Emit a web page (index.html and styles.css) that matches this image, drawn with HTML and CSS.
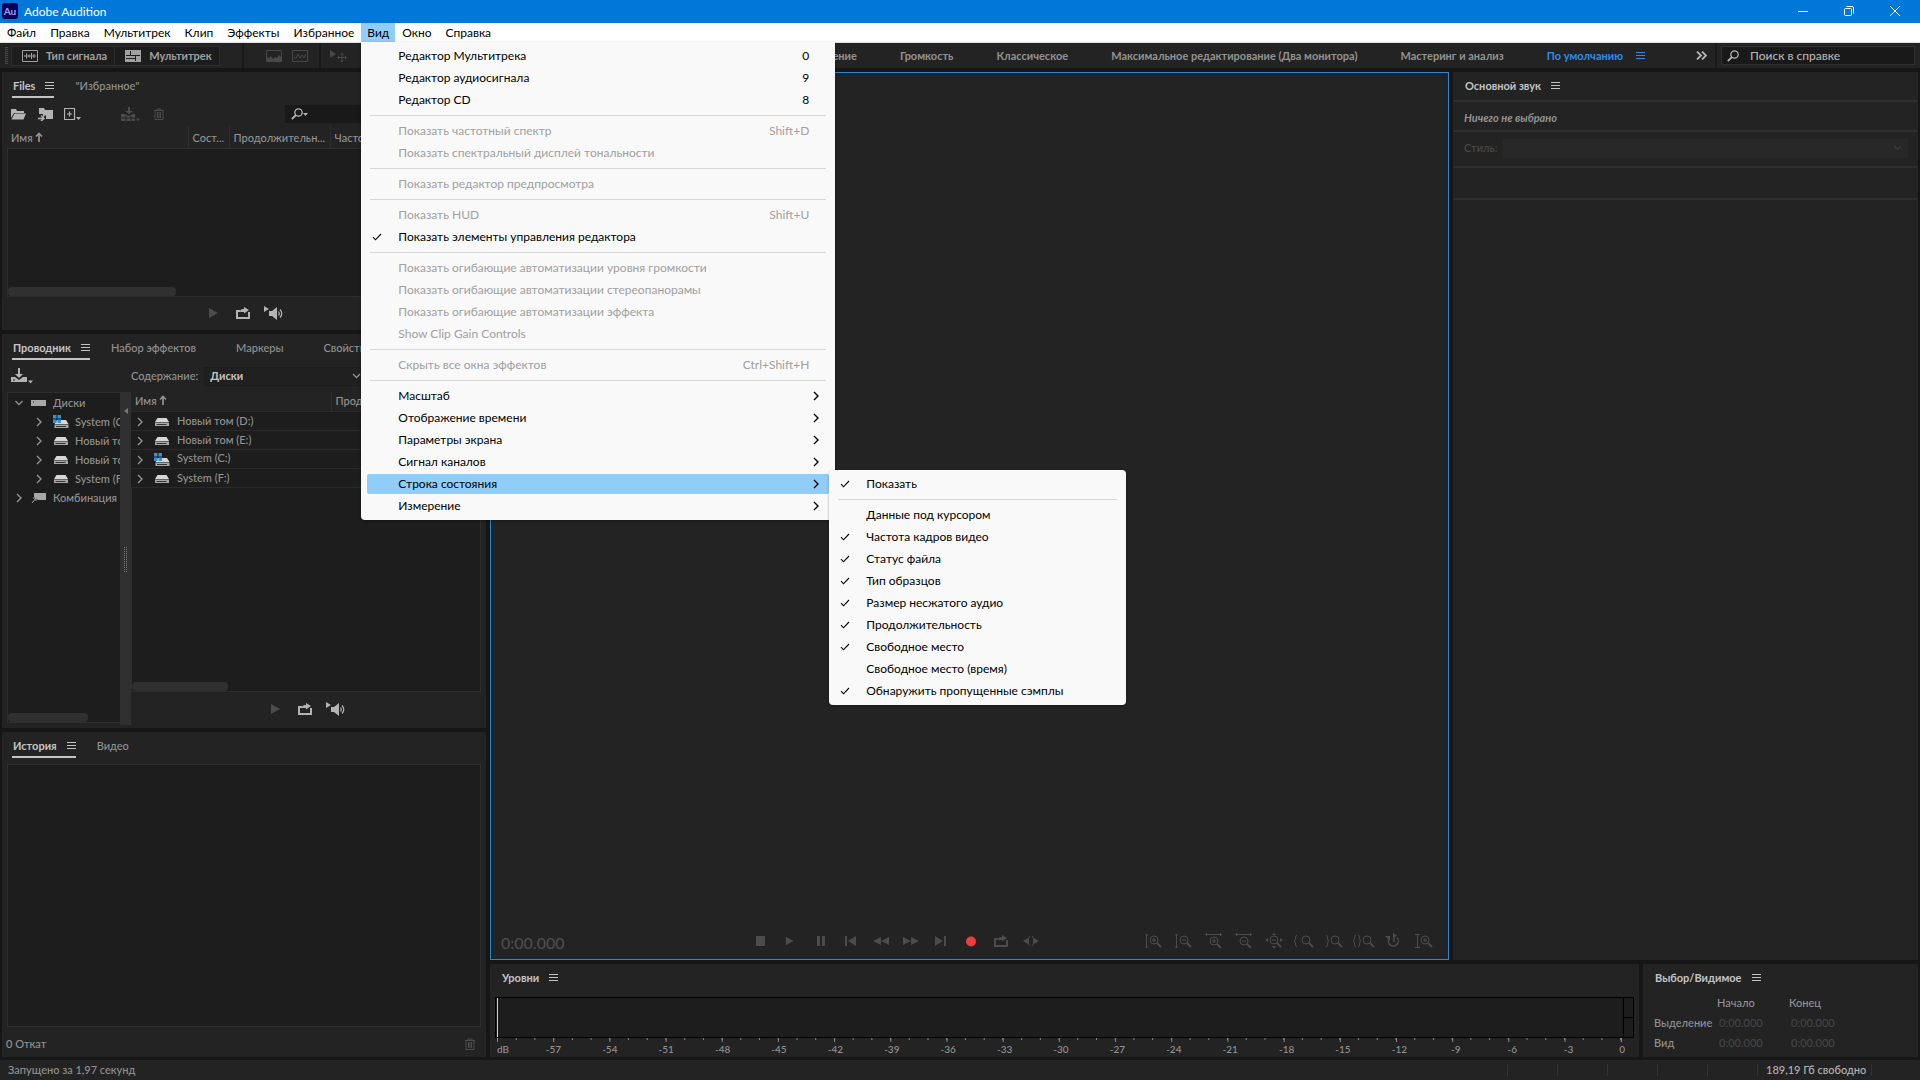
FILE: index.html
```html
<!DOCTYPE html>
<html lang="ru">
<head>
    <meta charset="UTF-8">
    <meta name="viewport" content="width=device-width, initial-scale=1.0">
    <title>Adobe Audition</title>
    <link rel="stylesheet" href="styles.css">
</head>
<body>
    <!-- shared icons -->
    <svg class="sprite" aria-hidden="true">
        <symbol id="i-menu" viewBox="0 0 9 9"><path d="M0 1.5h9M0 4.5h9M0 7.5h9" stroke="currentColor" fill="none"/></symbol>
        <symbol id="i-check" viewBox="0 0 10 8"><path d="M1 4.2l2.5 2.6L9 1" stroke="currentColor" fill="none" stroke-width="1.1"/></symbol>
        <symbol id="i-right" viewBox="0 0 6 10"><path d="M1 1l4 4-4 4" stroke="currentColor" fill="none" stroke-width="1.4"/></symbol>
        <symbol id="i-down" viewBox="0 0 9 6"><path d="M1 1l3.5 3.5L8 1" stroke="currentColor" fill="none" stroke-width="1.3"/></symbol>
        <symbol id="i-sort" viewBox="0 0 8 10"><path d="M4 10V2M1 4.5L4 1.5l3 3" stroke="currentColor" fill="none" stroke-width="1.7"/></symbol>
        <symbol id="i-search" viewBox="0 0 12 12"><circle cx="7.5" cy="4.5" r="3.7" stroke="currentColor" fill="none" stroke-width="1.3"/><path d="M5 7L.8 11.2" stroke="currentColor" stroke-width="1.8"/></symbol>
        <symbol id="i-trash" viewBox="0 0 12 12"><path d="M1 2.5h10M4 2.5V1h4v1.500M2 2.500V11.500h8V2.500M4.500 4v6M6 4v6M7.500 4v6" stroke="currentColor" fill="none"/></symbol>
        <symbol id="i-import" viewBox="0 0 22 16"><path d="M7 0h2v6h3L8 10 4 6h3zM0 9h4l4 3 4-3h4v5H0z" fill="currentColor"/><path d="M2 12h2" stroke="#232323"/><path d="M17 12.500h5l-2.500 3z" fill="currentColor"/></symbol>
        <symbol id="i-drive" viewBox="0 0 15 10"><path d="M3 1h9l2.500 4H.5z" fill="#d6d6d6"/><path d="M.5 5.500h14V9H.5z" fill="#a8a8a8"/><path d="M2 7.500h10" stroke="#333"/></symbol>
        <symbol id="i-windrive" viewBox="0 0 16 14"><path d="M4 5h9l2.500 4H1.500z" fill="#d6d6d6"/><path d="M1.500 9.500h14V13h-14z" fill="#a8a8a8"/><path d="M3 11.500h10" stroke="#333"/><path d="M0 0h3.500v3.500H0zM4.500 0H8v3.500H4.500zM0 4.500h3.500V8H0zM4.500 4.500H8V8H4.500z" fill="#3793d1"/></symbol>
        <symbol id="i-play" viewBox="0 0 14 12"><path d="M1 1l9 5-9 5z" fill="currentColor"/></symbol>
        <symbol id="i-loop" viewBox="0 0 14 12"><path d="M4 4H1v7h12V5" stroke="currentColor" fill="none" stroke-width="2"/><path d="M4 5c0-2 1-3 3-3h1V0l5 3-5 3.500V5z" fill="currentColor"/></symbol>
        <symbol id="i-speaker" viewBox="0 0 20 14"><path d="M0 0l5 3-5 3zM5 5h3l5-4v13l-5-4H5z" fill="currentColor"/><path d="M14.500 5.500q1.500 2 0 4M16 3.500q3.500 4 0 8" stroke="currentColor" fill="none" stroke-width="1.200"/></symbol>
        <symbol id="i-mag" viewBox="0 0 18 16"><circle cx="9" cy="7" r="4" stroke="currentColor" fill="none"/><path d="M12 10l4 4" stroke="currentColor" stroke-width="1.800"/></symbol>
    </svg>

    <header class="titlebar">
        <span class="logo">Au</span>
        <span class="app-name">Adobe Audition</span>
        <button class="win-btn" aria-label="Свернуть"><svg width="10" height="10"><path d="M0 5.500h10" stroke="#fff"/></svg></button>
        <button class="win-btn" aria-label="Развернуть"><svg width="10" height="10"><rect x=".5" y="2.500" width="7" height="7" rx="1" fill="none" stroke="#fff"/><path d="M2.500.5H8a1.500 1.500 0 0 1 1.500 1.500v5.500" fill="none" stroke="#fff"/></svg></button>
        <button class="win-btn" aria-label="Закрыть"><svg width="10" height="10"><path d="M0 0l10 10M10 0L0 10" stroke="#fff"/></svg></button>
    </header>

    <nav class="menubar">
        <button class="menubar-item">Файл</button>
        <button class="menubar-item">Правка</button>
        <button class="menubar-item">Мультитрек</button>
        <button class="menubar-item">Клип</button>
        <button class="menubar-item">Эффекты</button>
        <button class="menubar-item">Избранное</button>
        <div class="menubar-open">
            <button class="menubar-item active">Вид</button>
            <ul class="menu menu-view">
                <li><button class="menu-item">Редактор Мультитрека<kbd>0</kbd></button></li>
                <li><button class="menu-item">Редактор аудиосигнала<kbd>9</kbd></button></li>
                <li><button class="menu-item">Редактор CD<kbd>8</kbd></button></li>
                <li class="separator"></li>
                <li><button class="menu-item" disabled>Показать частотный спектр<kbd>Shift+D</kbd></button></li>
                <li><button class="menu-item" disabled>Показать спектральный дисплей тональности</button></li>
                <li class="separator"></li>
                <li><button class="menu-item" disabled>Показать редактор предпросмотра</button></li>
                <li class="separator"></li>
                <li><button class="menu-item" disabled>Показать HUD<kbd>Shift+U</kbd></button></li>
                <li><button class="menu-item"><svg class="check"><use href="#i-check"/></svg>Показать элементы управления редактора</button></li>
                <li class="separator"></li>
                <li><button class="menu-item" disabled>Показать огибающие автоматизации уровня громкости</button></li>
                <li><button class="menu-item" disabled>Показать огибающие автоматизации стереопанорамы</button></li>
                <li><button class="menu-item" disabled>Показать огибающие автоматизации эффекта</button></li>
                <li><button class="menu-item" disabled>Show Clip Gain Controls</button></li>
                <li class="separator"></li>
                <li><button class="menu-item" disabled>Скрыть все окна эффектов<kbd>Ctrl+Shift+H</kbd></button></li>
                <li class="separator"></li>
                <li><button class="menu-item">Масштаб<svg class="arrow"><use href="#i-right"/></svg></button></li>
                <li><button class="menu-item">Отображение времени<svg class="arrow"><use href="#i-right"/></svg></button></li>
                <li><button class="menu-item">Параметры экрана<svg class="arrow"><use href="#i-right"/></svg></button></li>
                <li><button class="menu-item">Сигнал каналов<svg class="arrow"><use href="#i-right"/></svg></button></li>
                <li>
                    <button class="menu-item active">Строка состояния<svg class="arrow"><use href="#i-right"/></svg></button>
                    <ul class="menu submenu">
                        <li><button class="menu-item"><svg class="check"><use href="#i-check"/></svg>Показать</button></li>
                        <li class="separator"></li>
                        <li><button class="menu-item">Данные под курсором</button></li>
                        <li><button class="menu-item"><svg class="check"><use href="#i-check"/></svg>Частота кадров видео</button></li>
                        <li><button class="menu-item"><svg class="check"><use href="#i-check"/></svg>Статус файла</button></li>
                        <li><button class="menu-item"><svg class="check"><use href="#i-check"/></svg>Тип образцов</button></li>
                        <li><button class="menu-item"><svg class="check"><use href="#i-check"/></svg>Размер несжатого аудио</button></li>
                        <li><button class="menu-item"><svg class="check"><use href="#i-check"/></svg>Продолжительность</button></li>
                        <li><button class="menu-item"><svg class="check"><use href="#i-check"/></svg>Свободное место</button></li>
                        <li><button class="menu-item">Свободное место (время)</button></li>
                        <li><button class="menu-item"><svg class="check"><use href="#i-check"/></svg>Обнаружить пропущенные сэмплы</button></li>
                    </ul>
                </li>
                <li><button class="menu-item">Измерение<svg class="arrow"><use href="#i-right"/></svg></button></li>
            </ul>
        </div>
        <button class="menubar-item">Окно</button>
        <button class="menubar-item">Справка</button>
    </nav>

    <div class="toolbar">
        <span class="grip"></span>
        <div class="view-switch">
            <button class="view-btn"><svg width="16" height="12"><path d="M.5.500h15v11H.5zM2 6h12M4.500 3.500v5M7 4.500v3M9.500 3v6M12 4v4" fill="none" stroke="currentColor"/></svg>Тип сигнала</button>
            <button class="view-btn"><svg width="16" height="12"><path d="M0 0h16v12H0z" fill="currentColor"/><path d="M1 5.500h14M5.500 1v4M10.500 6v5M1 8.500h9" stroke="#1d1d1d"/></svg>Мультитрек</button>
        </div>
        <span class="bar bar-wide"></span>
        <div class="tools">
            <button class="icon-btn" aria-label="Спектр"><svg width="16" height="12"><path d="M.5.500h15v11H.5z" fill="none" stroke="#484848"/><path d="M1 11V7l2 1 2-2 2 3 2-2 2 1 2-3 2 2v4z" fill="#484848"/></svg></button>
            <button class="icon-btn" aria-label="Тональность"><svg width="16" height="12"><path d="M.5.500h15v11H.5zM2 7l2 1.500L6 4l2 4 2-3 2 3 2-4" fill="none" stroke="#484848"/></svg></button>
        </div>
        <span class="bar"></span>
        <button class="icon-btn move-tool" aria-label="Перемещение"><svg width="18" height="14"><path d="M1 1l6 4-6 4z" fill="#484848"/><path d="M13 4v9M8.500 8.500h9M11.500 5.500L13 4l1.500 1.500M11.500 11.500L13 13l1.500-1.500M10 7L8.500 8.500 10 10M16 7l1.500 1.500L16 10" fill="none" stroke="#484848"/></svg></button>
        <nav class="workspaces">
            <a href="#">Восстановление</a>
            <a href="#">Громкость</a>
            <a href="#">Классическое</a>
            <a href="#">Максимальное редактирование (Два монитора)</a>
            <a href="#">Мастеринг и анализ</a>
            <a href="#" class="active">По умолчанию<svg class="burger"><use href="#i-menu"/></svg></a>
        </nav>
        <button class="icon-btn more" aria-label="Ещё"><svg width="11" height="9"><path d="M1 .5l4 4-4 4M6 .5l4 4-4 4" fill="none" stroke="currentColor" stroke-width="1.800"/></svg></button>
        <span class="bar"></span>
        <label class="help-search"><svg width="12" height="12"><use href="#i-search"/></svg><input type="text" placeholder="Поиск в справке" aria-label="Поиск в справке"></label>
    </div>

    <main class="workspace">
        <div class="col-left">
            <section class="panel">
                <div class="tabs">
                    <button class="tab active">Files<svg class="burger"><use href="#i-menu"/></svg></button>
                    <button class="tab">"Избранное"</button>
                </div>
                <div class="panel-tools files-tools">
                    <button class="icon-btn" aria-label="Открыть"><svg width="16" height="12"><path d="M0 1h5l1 2h7v2H3l-3 5z" fill="currentColor"/><path d="M3.500 5.500H15L12.500 11.500H.5z" fill="currentColor"/></svg></button>
                    <button class="icon-btn" aria-label="Импорт"><svg width="17" height="14"><path d="M2 1h5l1 2h8v9H9l0-4-3 2V7H2z" fill="currentColor"/><path d="M1 11.500h5M4 8.500l3 3-3 2.500" fill="none" stroke="currentColor" stroke-width="1.500"/></svg></button>
                    <button class="icon-btn" aria-label="Создать"><svg width="17" height="13"><path d="M.5.500h10v11H.5zM3 6h5M5.500 3.500v5" fill="none" stroke="currentColor" stroke-width="1.200"/><path d="M12 9h5l-2.500 3z" fill="currentColor"/></svg></button>
                    <button class="icon-btn dim insert" aria-label="Вставить"><svg width="20" height="15"><path d="M8 0h2v4h3L9 7 5 4h3zM1 7h3l5 2 4-2h2v7H1z" fill="currentColor"/><path d="M1 11h14M6 9v5M11 9v5" stroke="#232323"/><path d="M16 11.500h4l-2 2.500z" fill="currentColor"/></svg></button>
                    <button class="icon-btn dim" aria-label="Удалить"><svg width="12" height="12"><use href="#i-trash"/></svg></button>
                    <label class="file-search"><svg width="12" height="12"><use href="#i-search"/></svg><svg width="5" height="3"><path d="M0 0h5L2.500 3z" fill="currentColor"/></svg><input type="text" aria-label="Поиск файлов"></label>
                </div>
                <div class="list">
                    <table class="files-table">
                        <thead><tr><th class="c-name">Имя <svg class="sort"><use href="#i-sort"/></svg></th><th class="c-state">Сост...</th><th class="c-len">Продолжительн...</th><th>Частота</th></tr></thead>
                    </table>
                    <div class="list-body"><div class="thumb thumb-files"></div></div>
                </div>
                <div class="preview">
                    <button class="icon-btn dim" aria-label="Воспроизвести"><svg width="14" height="12"><use href="#i-play"/></svg></button>
                    <button class="icon-btn" aria-label="Повтор"><svg width="14" height="12"><use href="#i-loop"/></svg></button>
                    <button class="icon-btn" aria-label="Автовоспроизведение"><svg width="20" height="14"><use href="#i-speaker"/></svg></button>
                </div>
            </section>

            <section class="panel">
                <div class="tabs tabs-wide">
                    <button class="tab active">Проводник<svg class="burger"><use href="#i-menu"/></svg></button>
                    <button class="tab">Набор эффектов</button>
                    <button class="tab">Маркеры</button>
                    <button class="tab">Свойства</button>
                </div>
                <div class="panel-tools explorer-tools">
                    <button class="icon-btn" aria-label="Импорт файла"><svg width="22" height="16"><use href="#i-import"/></svg></button>
                    <label class="content-label" for="contents">Содержание:</label>
                    <span class="select-wrap"><select id="contents"><option>Диски</option></select><svg class="down"><use href="#i-down"/></svg></span>
                </div>
                <div class="explorer">
                    <div class="tree">
                        <ul>
                            <li class="node"><svg class="down"><use href="#i-down"/></svg><svg width="16" height="8"><path d="M0 1h15v6H0z" fill="#a8a8a8"/><path d="M2 3h1" stroke="#222"/></svg>Диски</li>
                            <li class="node child"><svg class="arrow"><use href="#i-right"/></svg><svg width="16" height="14"><use href="#i-windrive"/></svg>System (C:)</li>
                            <li class="node child"><svg class="arrow"><use href="#i-right"/></svg><svg width="16" height="10"><use href="#i-drive"/></svg>Новый том (D:)</li>
                            <li class="node child"><svg class="arrow"><use href="#i-right"/></svg><svg width="16" height="10"><use href="#i-drive"/></svg>Новый том (E:)</li>
                            <li class="node child"><svg class="arrow"><use href="#i-right"/></svg><svg width="16" height="10"><use href="#i-drive"/></svg>System (F:)</li>
                            <li class="node"><svg class="arrow"><use href="#i-right"/></svg><svg width="16" height="12"><path d="M3 1h12v7H7L3 5z" fill="#a8a8a8"/><path d="M1 11l4-5M2 6h3v3" stroke="#a8a8a8" fill="none"/></svg>Комбинация</li>
                        </ul>
                        <div class="thumb thumb-tree"></div>
                    </div>
                    <div class="splitter"><svg class="collapse" width="4" height="6"><path d="M4 0v6L0 3z" fill="#777"/></svg><span class="dots"></span></div>
                    <div class="drives">
                        <div class="list">
                            <table class="drives-table">
                                <thead><tr><th class="c-drive">Имя <svg class="sort"><use href="#i-sort"/></svg></th><th>Продолжительность</th></tr></thead>
                                <tbody>
                                    <tr><td colspan="2"><svg class="arrow"><use href="#i-right"/></svg><svg width="16" height="10"><use href="#i-drive"/></svg>Новый том (D:)</td></tr>
                                    <tr><td colspan="2"><svg class="arrow"><use href="#i-right"/></svg><svg width="16" height="10"><use href="#i-drive"/></svg>Новый том (E:)</td></tr>
                                    <tr><td colspan="2"><svg class="arrow"><use href="#i-right"/></svg><svg width="16" height="14"><use href="#i-windrive"/></svg>System (C:)</td></tr>
                                    <tr><td colspan="2"><svg class="arrow"><use href="#i-right"/></svg><svg width="16" height="10"><use href="#i-drive"/></svg>System (F:)</td></tr>
                                </tbody>
                            </table>
                            <div class="list-body"><div class="thumb thumb-drives"></div></div>
                        </div>
                        <div class="preview">
                            <button class="icon-btn dim" aria-label="Воспроизвести"><svg width="14" height="12"><use href="#i-play"/></svg></button>
                            <button class="icon-btn" aria-label="Повтор"><svg width="14" height="12"><use href="#i-loop"/></svg></button>
                            <button class="icon-btn" aria-label="Автовоспроизведение"><svg width="20" height="14"><use href="#i-speaker"/></svg></button>
                        </div>
                    </div>
                </div>
            </section>

            <section class="panel">
                <div class="tabs">
                    <button class="tab active">История<svg class="burger"><use href="#i-menu"/></svg></button>
                    <button class="tab">Видео</button>
                </div>
                <div class="history-list"></div>
                <div class="history-foot"><span>0 Откат</span><button class="icon-btn dim" aria-label="Удалить"><svg width="12" height="12"><use href="#i-trash"/></svg></button></div>
            </section>
        </div>

        <div class="col-right">
            <div class="row-top">
                <section class="panel editor">
                    <div class="editor-foot">
                        <span class="time">0:00.000</span>
                        <div class="buttons transport">
                            <button aria-label="Стоп"><svg width="14" height="12"><path d="M2 1h9v10H2z" fill="currentColor"/></svg></button>
                            <button aria-label="Воспроизвести"><svg width="12" height="12"><use href="#i-play"/></svg></button>
                            <button aria-label="Пауза"><svg width="14" height="12"><path d="M3 1h3v10H3zM8 1h3v10H8z" fill="currentColor"/></svg></button>
                            <button aria-label="В начало"><svg width="14" height="12"><path d="M1 1h2v10H1zM12 1v10L4 6z" fill="currentColor"/></svg></button>
                            <button aria-label="Назад"><svg width="16" height="12"><path d="M8 2v8L0 6zM16 2v8L8 6z" fill="currentColor"/></svg></button>
                            <button aria-label="Вперёд"><svg width="16" height="12"><path d="M0 2v8l8-4zM8 2v8l8-4z" fill="currentColor"/></svg></button>
                            <button aria-label="В конец"><svg width="14" height="12"><path d="M10 1h2v10h-2zM1 1v10l8-5z" fill="currentColor"/></svg></button>
                            <button class="record" aria-label="Запись"><svg width="12" height="12"><circle cx="6" cy="6.500" r="5" fill="currentColor"/></svg></button>
                            <button aria-label="Повтор"><svg width="14" height="12"><use href="#i-loop"/></svg></button>
                            <button aria-label="Пропуск"><svg width="16" height="12"><path d="M5 3v6L0 6zM11 3v6l5-3z" fill="currentColor"/><path d="M7 1L5.500 3v6L7 11M9 1l1.500 2v6L9 11M10 6h3" fill="none" stroke="currentColor"/></svg></button>
                        </div>
                        <div class="buttons zoom">
                            <button aria-label="Увеличить амплитуду"><svg width="18" height="16"><use href="#i-mag"/><path d="M1.500 1v14M0 2.500L1.500 1 3 2.500M0 13.500L1.500 15 3 13.500M7 7h4M9 5v4" fill="none" stroke="currentColor"/></svg></button>
                            <button aria-label="Уменьшить амплитуду"><svg width="18" height="16"><use href="#i-mag"/><path d="M1.500 1v14M0 2.500L1.500 1 3 2.500M0 13.500L1.500 15 3 13.500M7 7h4" fill="none" stroke="currentColor"/></svg></button>
                            <button aria-label="Увеличить время"><svg width="18" height="16"><use href="#i-mag" y="1"/><path d="M0 1.500h17M2 0L.5 1.500 2 3M15 0l1.500 1.500L15 3M7 8h4M9 6v4" fill="none" stroke="currentColor"/></svg></button>
                            <button aria-label="Уменьшить время"><svg width="18" height="16"><use href="#i-mag" y="1"/><path d="M0 1.500h17M2 0L.5 1.500 2 3M15 0l1.500 1.500L15 3M7 8h4" fill="none" stroke="currentColor"/></svg></button>
                            <button aria-label="Показать всё"><svg width="18" height="16"><use href="#i-mag"/><path d="M7 7h4" stroke="currentColor"/><path d="M0 7l3-2v4zM18 7l-3-2v4zM9 0L7 2h4zM9 16l-2-3h4z" fill="currentColor"/></svg></button>
                            <button aria-label="К началу выделения"><svg width="20" height="16"><use href="#i-mag" x="3" width="18" height="16"/><path d="M3 2Q1.500 2 1.500 5T0 8q1.500 0 1.500 3T3 14" fill="none" stroke="currentColor"/></svg></button>
                            <button aria-label="К концу выделения"><svg width="18" height="16"><use href="#i-mag" x="1" width="18" height="16"/><path d="M1 2q1.500 0 1.500 3T4 8q-1.500 0-1.500 3T1 14" fill="none" stroke="currentColor"/></svg></button>
                            <button aria-label="К выделению"><svg width="22" height="16"><use href="#i-mag" x="5" width="18" height="16"/><path d="M3 2Q1.500 2 1.500 5T0 8q1.500 0 1.500 3T3 14M5 2q1.500 0 1.500 3T8 8q-1.500 0-1.500 3T5 14" fill="none" stroke="currentColor"/></svg></button>
                            <button aria-label="Сброс масштаба"><svg width="18" height="16"><path d="M12 4.500a5 5 0 1 1-8 1M9 9V4" fill="none" stroke="currentColor" stroke-width="1.500"/><path d="M8 0v5l4-2.500zM0 3h5v5z" fill="currentColor"/></svg></button>
                            <button aria-label="Масштаб дорожки"><svg width="18" height="16"><use href="#i-mag" x="1" width="18" height="16"/><path d="M2.500 1v14M0 1.500h5M0 14.500h5M8 7h4M10 5v4" fill="none" stroke="currentColor"/></svg></button>
                        </div>
                    </div>
                </section>

                <section class="panel sound">
                    <div class="tabs"><button class="tab title">Основной звук<svg class="burger"><use href="#i-menu"/></svg></button></div>
                    <p class="empty">Ничего не выбрано</p>
                    <div class="style-row"><label for="style">Стиль:</label><span class="select-wrap"><select id="style" disabled></select><svg class="down"><use href="#i-down"/></svg></span></div>
                    <div class="blank-row"></div>
                </section>
            </div>

            <div class="row-bottom">
                <section class="panel levels">
                    <div class="tabs"><button class="tab title">Уровни<svg class="burger"><use href="#i-menu"/></svg></button></div>
                    <div class="meter"><div class="meter-track"></div><div class="meter-clip"><i></i><i></i></div></div>
                    <div class="ticks"></div>
                    <div class="scale">
                        <span>dB</span><span>-57</span><span>-54</span><span>-51</span><span>-48</span><span>-45</span><span>-42</span><span>-39</span><span>-36</span><span>-33</span><span>-30</span><span>-27</span><span>-24</span><span>-21</span><span>-18</span><span>-15</span><span>-12</span><span>-9</span><span>-6</span><span>-3</span><span>0</span>
                    </div>
                </section>

                <section class="panel selection">
                    <div class="tabs"><button class="tab title">Выбор/Видимое<svg class="burger"><use href="#i-menu"/></svg></button></div>
                    <table class="selection-table">
                        <thead><tr><td></td><th>Начало</th><th>Конец</th></tr></thead>
                        <tbody>
                            <tr><th>Выделение</th><td>0:00.000</td><td>0:00.000</td></tr>
                            <tr><th>Вид</th><td>0:00.000</td><td>0:00.000</td></tr>
                        </tbody>
                    </table>
                </section>
            </div>
        </div>
    </main>

    <footer class="statusbar">
        <span class="status-text">Запущено за 1,97 секунд</span>
        <span class="cell"></span><span class="cell"></span><span class="cell"></span><span class="cell"></span><span class="cell"></span>
        <span class="cell cell-space">189,19 Гб свободно</span>
        <span class="cell"></span>
    </footer>
</body>
</html>
```
FILE: styles.css
```css
* {
    box-sizing: border-box;
}

body {
    display: flex;
    flex-direction: column;
    height: 100vh;
    margin: 0;
    overflow: hidden;
    background-color: #161616;
    color: #929292;
    font-family: Lato, "Noto Sans", sans-serif;
    font-size: 11px;
    font-weight: 500;
    line-height: 16px;
}

button, input, select {
    margin: 0;
    padding: 0;
    border: 0;
    border-radius: 0;
    background: none;
    color: inherit;
    font: inherit;
}

ul {
    list-style: none;
    margin: 0;
    padding: 0;
}

svg {
    flex: none;
}

table {
    border-collapse: collapse;
    width: 100%;
    table-layout: fixed;
}

th {
    font-weight: inherit;
    text-align: left;
}

td, th {
    padding: 0;
    white-space: nowrap;
}

.sprite {
    position: absolute;
    width: 0;
    height: 0;
}

.burger {
    width: 9px;
    height: 9px;
    margin-left: 10px;
}

.arrow {
    width: 6px;
    height: 10px;
}

.down {
    width: 9px;
    height: 6px;
}

.icon-btn {
    display: flex;
    align-items: center;
    color: #b4b4b4;
}

.dim {
    color: #4c4c4c;
}

/* title bar */
.titlebar {
    display: flex;
    align-items: center;
    height: 23px;
    padding: 0 2px;
    background-color: #0078d9;
    color: #fff;
    font-size: 12px;
    font-weight: 400;
}

.logo {
    width: 16px;
    height: 16px;
    margin-bottom: 2px;
    border-radius: 3px;
    background-color: #00005b;
    color: #a5a5ff;
    font-size: 10px;
    font-weight: 700;
    text-align: center;
}

.app-name {
    flex: 1;
    margin-left: 6px;
}

.win-btn {
    width: 46px;
    height: 20px;
}

/* menus */
.menubar {
    display: flex;
    height: 20px;
    border-bottom: 1px solid #e0e0e0;
    background-color: #fff;
    color: #000;
    font-size: 12px;
    font-weight: 400;
}

.menubar-item {
    height: 19px;
    padding: 0 7px;
}

.menubar-item.active {
    background-color: #91cdf9;
}

.menubar-open {
    position: relative;
}

.menubar-open > .menubar-item {
    padding: 0 6px;
}

.menu {
    position: absolute;
    z-index: 10;
    padding: 3px 6px;
    border-radius: 0 0 4px 4px;
    background-color: #f9f9f9;
    box-shadow: 0 1px 3px rgba(0, 0, 0, 0.3);
}

.menu li {
    position: relative;
    padding: 1px 0;
}

.menu-view {
    top: 19px;
    left: 0;
    width: 474px;
}

.menu .submenu {
    top: -3px;
    left: 100%;
    width: 297px;
    border-radius: 4px;
}

.menu-item {
    display: flex;
    align-items: center;
    position: relative;
    width: 100%;
    height: 20px;
    padding: 0 20px 0 31px;
    border-radius: 2px;
    text-align: left;
    white-space: nowrap;
}

.menu-item:disabled {
    color: #a0a0a0;
}

.menu-item.active {
    background-color: #91cdf9;
}

.menu-item kbd {
    margin-left: auto;
    font: inherit;
}

.menu-item .arrow {
    position: absolute;
    top: 5px;
    right: 10px;
}

.menu-item .check {
    position: absolute;
    top: 6px;
    left: 5px;
    width: 10px;
    height: 8px;
}

.menu .separator {
    height: 9px;
    margin: 0 3px;
    padding: 0;
    border-top: 4px solid transparent;
    background: linear-gradient(#d7d7d7, #d7d7d7) 0 0 / 100% 1px no-repeat;
}

/* toolbar */
.toolbar {
    display: flex;
    align-items: center;
    height: 25px;
    padding: 0 5px;
    background-color: #232323;
}

.grip {
    width: 3px;
    height: 18px;
    margin-right: 3px;
    background: repeating-linear-gradient(#484848 0 1px, transparent 1px 2px);
}

.view-switch {
    display: flex;
    height: 20px;
    border: 1px solid #2c2c2c;
    background-color: #1d1d1d;
    color: #a0a0a0;
    font-weight: 700;
}

.view-btn {
    display: flex;
    align-items: center;
    gap: 8px;
    padding: 0 7px 0 10px;
}

.view-btn + .view-btn {
    border-left: 1px solid #2c2c2c;
}

.bar {
    flex: none;
    width: 2px;
    height: 25px;
    background-color: #1a1a1a;
}

.bar-wide {
    margin-left: 22px;
}

.tools {
    display: flex;
    gap: 10px;
    margin: 0 11px 0 22px;
}

.move-tool {
    margin-left: 8px;
}

.workspaces {
    display: flex;
    flex: 1;
    justify-content: flex-end;
    gap: 43px;
    white-space: nowrap;
}

.workspaces a {
    color: #929292;
    font-weight: 700;
    text-decoration: none;
}

.workspaces .active {
    color: #2d8ceb;
}

.workspaces .burger {
    margin-left: 13px;
}

.more {
    margin: 0 8px 0 51px;
}

.help-search {
    display: flex;
    align-items: center;
    width: 194px;
    height: 19px;
    margin-left: 4px;
    padding-left: 5px;
    border: 1px solid #303030;
    background-color: #191919;
    color: #b4b4b4;
    font-size: 12px;
}

.help-search input {
    width: 100%;
    margin-left: 11px;
}

input::placeholder {
    color: #b4b4b4;
    opacity: 1;
}

/* panels */
.workspace {
    display: grid;
    flex: 1;
    grid-template-columns: minmax(0, 484fr) minmax(0, 1428fr);
    gap: 4px;
    min-height: 0;
    padding: 4px 2px 3px;
}

.col-left {
    display: grid;
    grid-template-rows: minmax(0, 258fr) minmax(0, 394fr) minmax(0, 325fr);
    gap: 4px;
    min-height: 0;
}

.col-right {
    display: flex;
    flex-direction: column;
    gap: 4px;
    min-height: 0;
}

.row-top {
    display: grid;
    flex: 1;
    grid-template-columns: minmax(0, 959fr) minmax(0, 465fr);
    gap: 4px;
    min-height: 0;
}

.row-bottom {
    display: grid;
    grid-template-columns: minmax(0, 1149fr) minmax(0, 275fr);
    gap: 4px;
}

.panel {
    display: flex;
    flex-direction: column;
    min-width: 0;
    overflow: hidden;
    background-color: #232323;
}

.tabs {
    display: flex;
    align-items: flex-start;
    gap: 21px;
    height: 30px;
    padding: 5px 10px 0;
}

.tabs-wide .tab:nth-child(n + 3) {
    margin-left: 19px;
}

.tab {
    display: flex;
    align-items: center;
    height: 21px;
    padding-bottom: 2px;
    border-bottom: 2px solid transparent;
}

.tab.active,
.tab.title {
    color: #c4c4c4;
    font-weight: 700;
}

.tab.active {
    padding-left: 1px;
    border-color: #c4c4c4;
}

.tab.title {
    padding-left: 2px;
}

.panel-tools {
    display: flex;
    align-items: center;
    height: 24px;
    padding: 0 5px 0 9px;
}

.files-tools {
    gap: 10px;
}

.insert {
    margin: 0 3px 0 29px;
}

.file-search {
    display: flex;
    align-items: center;
    width: 196px;
    height: 18px;
    margin-left: auto;
    padding-left: 6px;
    background-color: #191919;
    color: #b4b4b4;
}

.file-search input {
    width: 100%;
}

.list {
    display: flex;
    flex: 1;
    flex-direction: column;
    min-height: 0;
    margin: 0 5px;
}

.list th {
    height: 22px;
    padding-left: 4px;
}

.list th + th {
    border-left: 1px solid #2e2e2e;
}

.files-table th {
    padding-top: 2px;
}

.sort {
    width: 8px;
    height: 10px;
}

.list-body,
.history-list {
    display: flex;
    flex: 1;
    align-items: flex-end;
    border: 1px solid #2e2e2e;
    background-color: #1d1d1d;
}

.c-name {
    width: 181px;
}

.c-state {
    width: 41px;
}

.c-len {
    width: 101px;
}

.c-drive {
    width: 200px;
}

.thumb {
    height: 9px;
    border-radius: 4px;
    background-color: #303030;
}

.thumb-files {
    width: 168px;
}

.thumb-tree {
    width: 80px;
}

.thumb-drives {
    width: 96px;
}

.preview {
    display: flex;
    align-items: center;
    justify-content: center;
    gap: 14px;
    height: 33px;
    padding: 0 0 2px 4px;
}

.explorer-tools {
    height: 28px;
    padding-bottom: 4px;
}

.content-label {
    margin: 0 6px 0 98px;
}

.select-wrap {
    display: flex;
    align-items: center;
    position: relative;
    width: 165px;
}

.select-wrap .down {
    position: absolute;
    right: 8px;
}

select {
    width: 100%;
    height: 19px;
    padding-left: 5px;
    border: 1px solid #1d1d1d;
    background-color: #202020;
    appearance: none;
    color: #c4c4c4;
    font-weight: 700;
}

.explorer {
    display: flex;
    flex: 1;
    min-height: 0;
    padding: 0 5px;
}

.tree {
    display: flex;
    flex-direction: column;
    justify-content: space-between;
    width: 113px;
    margin-bottom: 5px;
    border: 1px solid #2e2e2e;
    border-right: 0;
    background-color: #1d1d1d;
    overflow: hidden;
}

.node {
    display: flex;
    align-items: center;
    gap: 6px;
    height: 19px;
    padding-left: 5px;
    white-space: nowrap;
}

.node > svg:first-child {
    width: 12px;
}

.child {
    padding-left: 27px;
}

.child > svg:first-child {
    width: 8px;
    margin-right: 4px;
}

.splitter {
    display: flex;
    flex-direction: column;
    align-items: center;
    width: 11px;
    margin-bottom: 3px;
    background-color: #303030;
}

.collapse {
    margin: 16px 0 132px;
}

.dots {
    width: 4px;
    height: 26px;
    background: repeating-linear-gradient(#303030 0 1px, transparent 1px 2px), repeating-linear-gradient(90deg, #777 0 1px, transparent 1px 2px);
}

.drives {
    display: flex;
    flex: 1;
    flex-direction: column;
    min-width: 0;
}

.drives .list {
    margin: 0;
    background-color: #1d1d1d;
    overflow: hidden;
}

.drives .list-body {
    border-top: 0;
}

.drives .preview {
    height: 36px;
}

.drives th {
    height: 19px;
    background-color: #232323;
}

.drives tr {
    border-bottom: 1px solid #2a2a2a;
}

.drives td {
    height: 19px;
    padding-left: 6px;
}

.drives td svg {
    margin-right: 7px;
    vertical-align: middle;
}

.drives td .arrow {
    margin-right: 11px;
}

.history-list {
    margin: 2px 5px 0;
}

.history-foot {
    display: flex;
    align-items: center;
    justify-content: space-between;
    height: 30px;
    padding: 4px 10px 0 4px;
}

/* editor */
.editor {
    justify-content: flex-end;
    border: 1px solid #3f82bd;
    box-shadow: inset 0 0 0 2px #10273a;
}

.editor-foot {
    display: flex;
    align-items: center;
    height: 36px;
    padding: 0 9px 0 10px;
    color: #4c4c4c;
}

.time {
    flex: 1;
    padding-top: 4px;
    font-size: 16px;
}

.buttons {
    display: flex;
}

.buttons button {
    display: flex;
    align-items: center;
    justify-content: center;
    width: 30px;
    height: 24px;
}

.zoom {
    margin-left: 93px;
}

.buttons .record {
    color: #f03c3c;
}

/* essential sound */
.sound .tabs {
    border-bottom: 2px solid #2e2e2e;
}

.empty {
    height: 30px;
    margin: 0;
    padding: 8px 11px 0;
    border-bottom: 2px solid #2e2e2e;
    font-style: italic;
    font-weight: 700;
}

.style-row {
    display: flex;
    align-items: center;
    gap: 5px;
    height: 36px;
    padding: 0 10px 2px 11px;
    border-bottom: 2px solid #2e2e2e;
    color: #484848;
}

.style-row .select-wrap {
    flex: 1;
}

.style-row select {
    border: 0;
    background-color: #282828;
    opacity: 1;
}

.style-row .down {
    right: 6px;
    color: #3a3a3a;
}

.blank-row {
    height: 32px;
    border-bottom: 2px solid #2e2e2e;
}

/* levels */
.meter {
    display: flex;
    height: 41px;
    margin: 3px 5px 0;
    border: 1px solid #000;
    background-color: #1d1d1d;
}

.meter-track {
    flex: 1;
    margin: 0 0 0 1px;
    border-left: 1px solid #e8e04a;
}

.meter-clip {
    display: flex;
    flex-direction: column;
    width: 10px;
    border-left: 1px solid #000;
}

.meter-clip i {
    flex: 1;
}

.meter-clip i + i {
    border-top: 1px solid #000;
}

.ticks {
    height: 4px;
    margin: 0 17px 0 7px;
    border-right: 1px solid #8a8a8a;
    background:
        linear-gradient(90deg, #8a8a8a 1px, transparent 1px) 0 0 / 5% 4px repeat-x,
        linear-gradient(90deg, #8a8a8a 1px, transparent 1px) 0 0 / calc(100% / 60) 2px repeat-x;
}

.scale {
    display: grid;
    grid-template-columns: 1fr repeat(19, 2fr) 1fr;
    height: 15px;
    margin: 0 14px 0 7px;
    font-size: 10px;
    line-height: 15px;
    text-align: center;
}

.scale span:first-child {
    text-align: left;
}

.scale span:last-child {
    text-align: right;
}

/* selection / view */
.selection .tabs {
    height: 29px;
}

.selection-table th:first-child,
.selection-table td:first-child {
    width: 63px;
}

.selection-table {
    width: 100%;
    margin-left: 11px;
}

.selection-table tr > :nth-child(2) {
    width: 72px;
}

.selection-table tr {
    height: 20px;
}

.selection-table tbody td {
    padding-left: 2px;
    color: #444;
}

/* status bar */
.statusbar {
    display: flex;
    align-items: center;
    height: 20px;
    padding: 0 8px;
    background-color: #232323;
}

.status-text {
    flex: 1;
}

.cell {
    width: 50px;
    height: 12px;
    border-left: 1px solid #333;
    line-height: 12px;
}

.cell-space {
    width: 114px;
    padding-left: 8px;
    color: #b4b4b4;
    white-space: nowrap;
}

.cell:last-child {
    width: 41px;
}
```
